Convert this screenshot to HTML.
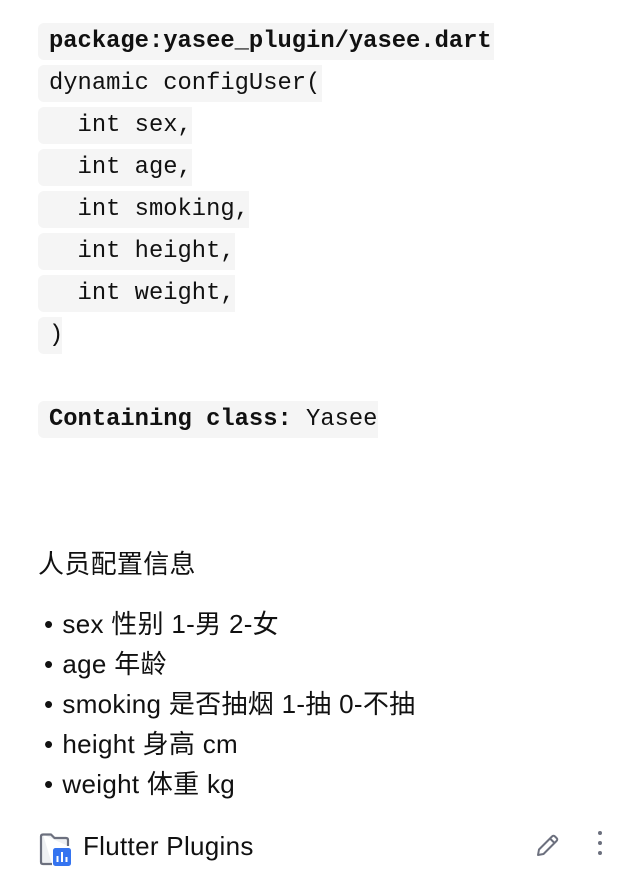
<!DOCTYPE html>
<html><head><meta charset="utf-8">
<style>
html,body{margin:0;padding:0;background:#fff;}
body{width:626px;height:888px;position:relative;overflow:hidden;color:#000;}
.c{position:absolute;left:38px;height:37px;background:#f5f5f5;border-radius:6px 0 0 6px;font-family:"Liberation Mono",monospace;font-size:23.8px;line-height:37px;padding-left:11px;white-space:pre;color:#111;}
.b{font-weight:bold;}
.t{position:absolute;left:38px;font-family:"Liberation Sans","Noto Sans CJK SC",sans-serif;font-size:26px;letter-spacing:0.3px;line-height:30px;white-space:pre;color:#111;}
.li{left:44px;}
.li span{margin-left:9px;}
</style></head><body>
<div class="c b" style="top:23px;width:445px">package:yasee_plugin/yasee.dart</div>
<div class="c" style="top:65px;width:273px">dynamic configUser(</div>
<div class="c" style="top:107px;width:143px">  int sex,</div>
<div class="c" style="top:149px;width:143px">  int age,</div>
<div class="c" style="top:191px;width:200px">  int smoking,</div>
<div class="c" style="top:233px;width:186px">  int height,</div>
<div class="c" style="top:275px;width:186px">  int weight,</div>
<div class="c" style="top:317px;width:13px">)</div>
<div class="c" style="top:401px;width:329px"><span class="b">Containing class:</span> Yasee</div>

<div class="t" style="top:549px">人员配置信息</div>
<div class="t li" style="top:609px">•<span>sex 性别 1-男 2-女</span></div>
<div class="t li" style="top:649px">•<span>age 年龄</span></div>
<div class="t li" style="top:689px">•<span>smoking 是否抽烟 1-抽 0-不抽</span></div>
<div class="t li" style="top:729px">•<span>height 身高 cm</span></div>
<div class="t li" style="top:769px">•<span>weight 体重 kg</span></div>

<svg style="position:absolute;left:38px;top:830px" width="36" height="38" viewBox="0 0 36 38">
<path d="M5 4.5 H13 L16.5 8 H28 Q30 8 30 10 V16 M5 4.5 Q3 4.5 3 6.5 V32 Q3 34 5 34 H14" fill="#eef0f3" stroke="#6c707e" stroke-width="2.2" stroke-linejoin="round"/>
<rect x="15" y="18" width="18" height="18" rx="2.5" fill="#3574f0"/>
<path d="M19.5 32 V26 M24 32 V22 M28.5 32 V27" stroke="#fff" stroke-width="2"/>
</svg>
<div class="t" style="left:83px;top:831px;font-family:'Liberation Sans',sans-serif">Flutter Plugins</div>
<svg style="position:absolute;left:534px;top:831px" width="28" height="28" viewBox="0 0 28 28">
<path d="M4 24 L5 18.5 L18 5.5 Q19.5 4 21 5.5 L22.5 7 Q24 8.5 22.5 10 L9.5 23 Z M16 7.5 L20.5 12" fill="none" stroke="#6c707e" stroke-width="2" stroke-linejoin="round"/>
</svg>
<svg style="position:absolute;left:590px;top:829px" width="20" height="30" viewBox="0 0 20 30">
<circle cx="10" cy="4" r="2" fill="#6c707e"/><circle cx="10" cy="14" r="2" fill="#6c707e"/><circle cx="10" cy="24" r="2" fill="#6c707e"/>
</svg>
</body></html>
